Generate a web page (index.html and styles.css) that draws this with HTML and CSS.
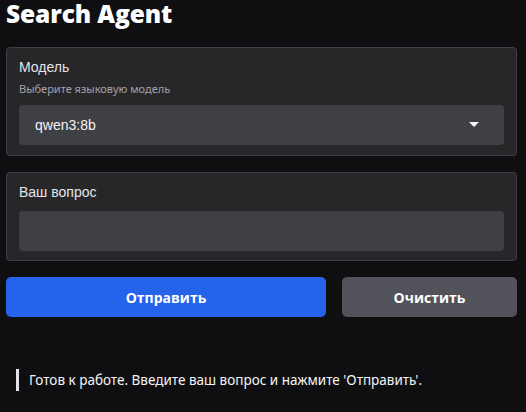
FILE: index.html
```html
<!DOCTYPE html>
<html lang="ru">
<head>
<meta charset="utf-8">
<link rel="stylesheet" href="styles.css">
</head>
<body>
<div class="app">
  <h1 class="title">Search Agent</h1>
  <div class="card card-model">
    <div class="label">Модель</div>
    <div class="info">Выберите языковую модель</div>
    <div class="select">
      <span class="select-value">qwen3:8b</span>
      <svg class="caret" width="10" height="6" viewBox="0 0 10 6"><path d="M0 0 H10 L5 5 Z" fill="#f4f4f5"/></svg>
    </div>
  </div>
  <div class="card card-question">
    <div class="label">Ваш вопрос</div>
    <div class="textbox"></div>
  </div>
  <div class="buttons">
    <button class="btn btn-primary">Отправить</button>
    <button class="btn btn-secondary">Очистить</button>
  </div>
  <div class="status">Готов к работе. Введите ваш вопрос и нажмите 'Отправить'.</div>
</div>
</body>
</html>
```

FILE: styles.css
```css
html, body {
  margin: 0;
  padding: 0;
  background: #0f0f11;
  color: #f4f4f5;
  font-family: "Noto Sans", "Open Sans", sans-serif;
}
.app {
  width: 511px;
  padding: 0 9px 0 6px;
  display: flex;
  flex-direction: column;
}
.title {
  margin: 0;
  height: 47px;
  font-family: "Open Sans", sans-serif;
  font-size: 24.5px;
  font-weight: 800;
  line-height: 28px;
  letter-spacing: -0.1px;
  color: #ffffff;
}
.card {
  box-sizing: border-box;
  background: #27272a;
  border: 1px solid #3f3f46;
  border-radius: 4px;
  padding: 0 12px;
}
.card-model {
  height: 109px;
  padding-top: 9px;
}
.card-question {
  margin-top: 16px;
  height: 89px;
  padding-top: 9px;
}
.label {
  font-family: "Liberation Sans", Arial, sans-serif;
  font-size: 14px;
  line-height: 20px;
  color: #e4e4e7;
}
.info {
  font-family: "Noto Sans", sans-serif;
  font-size: 11px;
  line-height: 14px;
  margin-top: 5px;
  color: #a1a1aa;
}
.select {
  margin-top: 9px;
  height: 40px;
  background: #3f3f46;
  border-radius: 4px;
  display: flex;
  align-items: center;
  justify-content: space-between;
  padding: 0 25px 0 16px;
}
.select-value {
  font-family: "Liberation Sans", Arial, sans-serif;
  font-size: 14px;
  color: #f4f4f5;
}
.caret {
  display: block;
}
.textbox {
  margin-top: 9px;
  height: 40px;
  background: #3f3f46;
  border-radius: 4px;
}
.buttons {
  margin-top: 16px;
  display: grid;
  grid-template-columns: 320px 175px;
  column-gap: 16px;
}
.btn {
  height: 40px;
  border: none;
  border-radius: 5px;
  color: #ffffff;
  font-family: "Open Sans", sans-serif;
  font-size: 14px;
  font-weight: 700;
  padding: 0;
}
.btn-primary {
  background: #2563eb;
}
.btn-secondary {
  background: #52525b;
}
.status {
  margin-top: 52px;
  margin-left: 10px;
  border-left: 3px solid #e4e4e7;
  padding-left: 10px;
  height: 22px;
  line-height: 22px;
  font-family: "Noto Sans", sans-serif;
  font-size: 13.5px;
  color: #f4f4f5;
}
```
